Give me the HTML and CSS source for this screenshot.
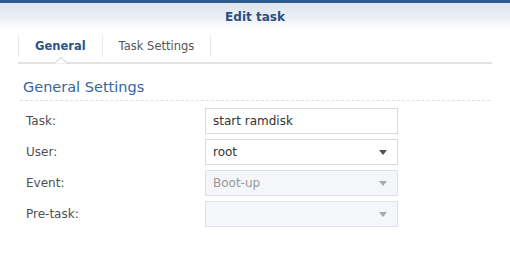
FILE: index.html
```html
<!DOCTYPE html>
<html>
<head>
<meta charset="utf-8">
<link rel="stylesheet" href="styles.css">
</head>
<body>
<div class="header">Edit task</div>
<div class="tabs">
  <div class="tab active">General
    <svg class="notch" width="14" height="7" viewBox="0 0 14 7"><path d="M0 6.5 L7 0.5 L14 6.5" fill="#fff" stroke="#dcdcdc" stroke-width="1.2"/></svg>
  </div>
  <div class="tab">Task Settings</div>
</div>
<div class="section">
  <div class="section-title">General Settings</div>
  <div class="form">
    <div class="row">
      <div class="label">Task:</div>
      <div class="field">start ramdisk</div>
    </div>
    <div class="row">
      <div class="label">User:</div>
      <div class="field select">root<span class="arrow"></span></div>
    </div>
    <div class="row">
      <div class="label">Event:</div>
      <div class="field select disabled">Boot-up<span class="arrow"></span></div>
    </div>
    <div class="row">
      <div class="label">Pre-task:</div>
      <div class="field select disabled"><span class="arrow"></span></div>
    </div>
  </div>
</div>
</body>
</html>
```
FILE: styles.css
```css
html, body {
  margin: 0;
  padding: 0;
  background: #fff;
  font-family: "DejaVu Sans", Verdana, sans-serif;
}
.header {
  border-top: 3px solid #2c5a8f;
  height: 27px;
  line-height: 28px;
  text-align: center;
  font-size: 12px;
  font-weight: bold;
  color: #2a4f7e;
  background: linear-gradient(to bottom, #dce4ed 0%, #eaeff5 50%, #ffffff 100%);
}
.tabs {
  margin: 5px 18px 0 18px;
  height: 27px;
  border-bottom: 2px solid #e2e2e2;
  display: flex;
  align-items: flex-start;
}
.tab {
  position: relative;
  height: 22px;
  line-height: 22px;
  padding: 0 16px 0 16px;
  font-size: 11.5px;
  color: #555;
  border-right: 1px solid #e6e9ee;
}
.tab.active {
  border-left: 1px solid #e6e9ee;
  color: #2d5586;
  font-weight: bold;
}
.notch {
  position: absolute;
  left: 35px;
  top: 22px;
  display: block;
}
.section {
  margin: 0 20px 0 20px;
}
.section-title {
  margin-top: 13px;
  padding: 0 0 3px 3px;
  line-height: 20px;
  font-size: 14.5px;
  color: #3566a0;
  border-bottom: 1px dashed #d8e0ea;
}
.form {
  margin-top: 7px;
  display: flex;
  flex-direction: column;
  gap: 5px;
}
.row {
  display: flex;
  align-items: center;
  height: 26px;
}
.label {
  width: 179px;
  padding-left: 6px;
  font-size: 12px;
  color: #4f4f4f;
}
.field {
  box-sizing: border-box;
  position: relative;
  width: 193px;
  height: 26px;
  line-height: 24px;
  padding-left: 7px;
  border: 1px solid #d5dce4;
  font-size: 12px;
  color: #333;
  background: #fff;
}
.field.disabled {
  background: #f4f6f9;
  color: #999;
  border-color: #dde2e8;
}
.arrow {
  position: absolute;
  right: 10px;
  top: 10px;
  width: 0;
  height: 0;
  border-left: 4.5px solid transparent;
  border-right: 4.5px solid transparent;
  border-top: 5px solid #505050;
}
.disabled .arrow {
  border-top-color: #a8a8a8;
}
```
